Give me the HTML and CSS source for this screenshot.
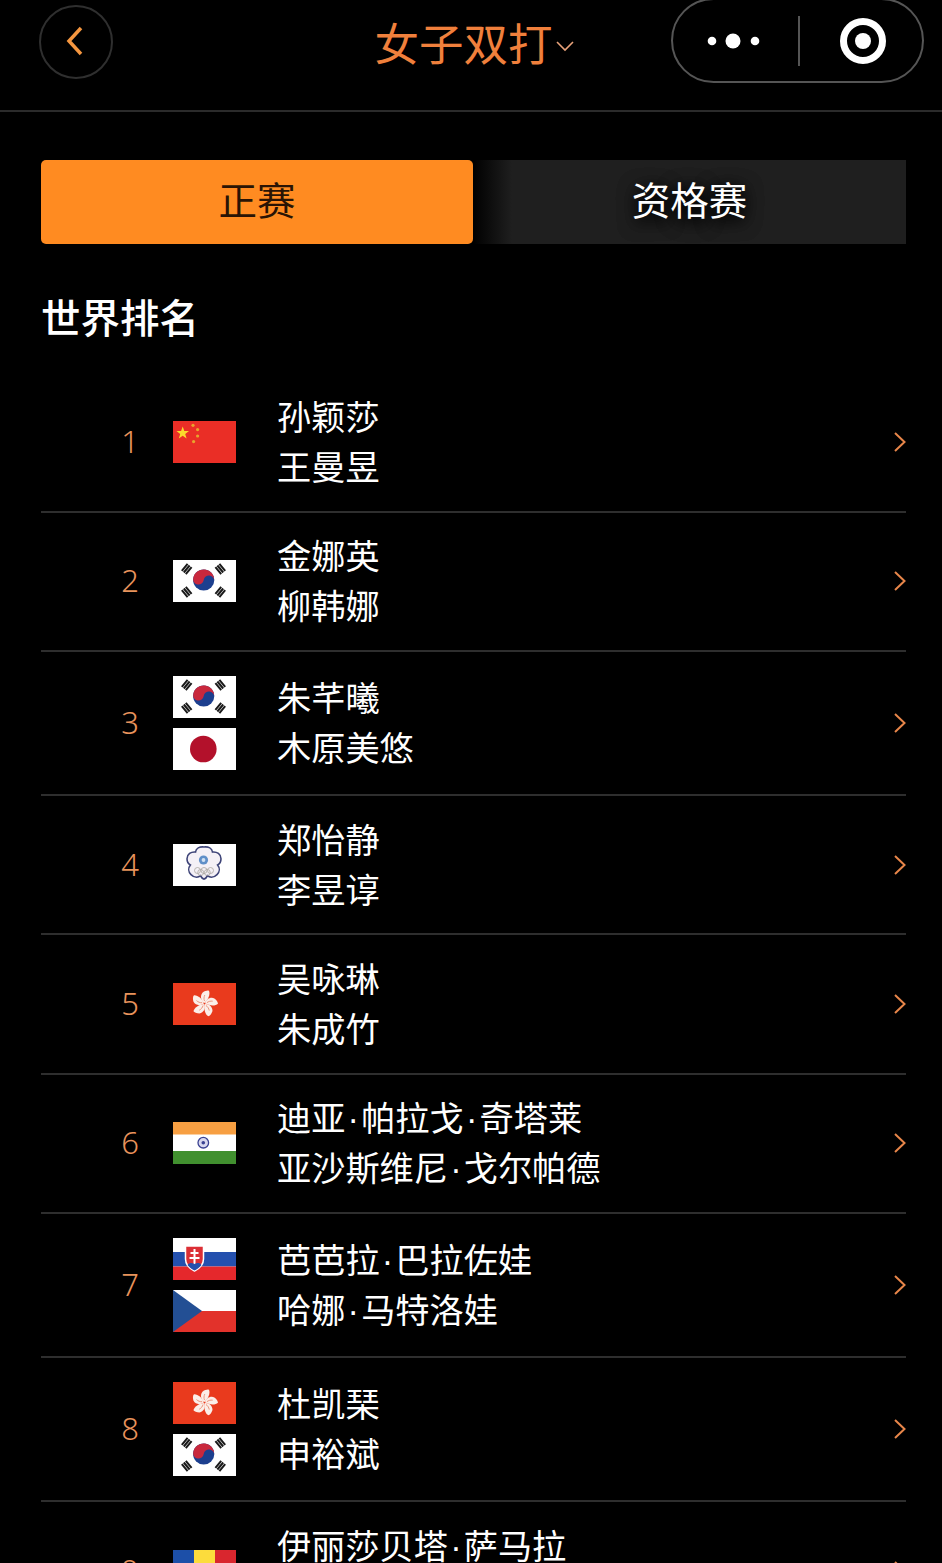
FILE: index.html
```html
<!DOCTYPE html>
<html lang="zh">
<head>
    <title>女子双打</title>
    <meta charset="UTF-8">
    <link rel="stylesheet" href="styles.css">
</head>
<body>

<!-- flags, reused by the rows below -->
<svg class="defs" aria-hidden="true">
    <symbol id="cn" viewBox="0 0 63 42">
        <rect width="63" height="42" fill="#ea2e26"/>
        <polygon points="9.700,5.500 11.300,10 16,10 12.200,12.900 13.600,17.400 9.700,14.700 5.800,17.400 7.200,12.900 3.400,10 8.100,10" fill="#fbd92c"/>
        <circle cx="20" cy="4.300" r="1.600" fill="#e8a52c"/>
        <circle cx="24.600" cy="8.600" r="1.600" fill="#e8a52c"/>
        <circle cx="24.600" cy="15" r="1.600" fill="#e8a52c"/>
        <circle cx="20.600" cy="20.600" r="1.600" fill="#e8a52c"/>
    </symbol>
    <symbol id="kr" viewBox="0 0 63 42">
        <rect width="63" height="42" fill="#fff"/>
        <circle cx="30.700" cy="20" r="10.600" fill="#1c3f8f"/>
        <path d="M20.100 20A10.600 10.600 0 0 1 41.300 20A5.300 5.300 0 0 0 30.700 20A5.300 5.300 0 0 1 20.100 20z" fill="#c9283d" transform="rotate(8 30.700 20)"/>
        <g stroke="#1a1a1a" stroke-width="2">
            <path d="M8.800 10.800l5.800-7M10.800 12.500l5.800-7M12.800 14.200l5.800-7"/>
            <path d="M42.400 7.200l5.800 7M44.400 5.500l5.800 7M46.400 3.800l5.800 7"/>
            <path d="M8.800 30.200l5.800 7M10.800 28.500l5.800 7M12.800 26.800l5.800 7"/>
            <path d="M42.400 33.800l5.800-7M44.400 35.500l5.800-7M46.400 37.200l5.800-7"/>
        </g>
    </symbol>
    <symbol id="jp" viewBox="0 0 63 42">
        <rect width="63" height="42" fill="#fff"/>
        <circle cx="30.300" cy="21" r="13.300" fill="#b3112b"/>
    </symbol>
    <symbol id="tpe" viewBox="0 0 63 42">
        <rect width="63" height="42" fill="#fff"/>
        <path d="M31 3c4.500-.500 8 1.500 8.500 5 4.500-.500 8.500 2.200 8.500 6.800 0 2.800-1.200 5-3.400 6.200 2.300 2.800 2.300 6.800-.600 9.600-2.800 2.800-6.800 3.400-9.600 1.100-1.100 2.300-2.300 3.400-3.400 3.400s-2.300-1.100-3.400-3.400c-2.800 2.300-6.800 1.700-9.600-1.100-2.900-2.800-2.900-6.800-.600-9.600-2.200-1.200-3.400-3.400-3.400-6.200 0-4.600 4-7.300 8.500-6.800.500-3.500 4-5.500 8.500-5z" fill="#f4f0f6" stroke="#3e4478" stroke-width="1.600"/>
        <circle cx="30.500" cy="16" r="4.600" fill="#5f8fc8"/>
        <circle cx="30.500" cy="16" r="1.900" fill="#cfe0f2"/>
        <g fill="none" stroke="#a9a6a0" stroke-width=".800">
            <circle cx="24.500" cy="26.500" r="3"/>
            <circle cx="31" cy="26.500" r="3"/>
            <circle cx="37.500" cy="26.500" r="3"/>
            <circle cx="27.700" cy="28.500" r="3"/>
            <circle cx="34.300" cy="28.500" r="3"/>
        </g>
    </symbol>
    <symbol id="hk" viewBox="0 0 63 42">
        <rect width="63" height="42" fill="#e93a1d"/>
        <g id="flower">
            <g id="petal">
                <path d="M31.500 20c-4-2.500-4.600-7.500-1.800-10.500 2.200-1.600 5-2.300 6.200-1.700 1.700 3.400-.600 8.800-4.400 12.200z" fill="#fbeee8"/>
                <path d="M31.500 18c-.800-2-.600-4 .300-6" fill="none" stroke="#e9866c" stroke-width=".800"/>
            </g>
            <use href="#petal" transform="rotate(72 31.500 20.500)"/>
            <use href="#petal" transform="rotate(144 31.500 20.500)"/>
            <use href="#petal" transform="rotate(216 31.500 20.500)"/>
            <use href="#petal" transform="rotate(288 31.500 20.500)"/>
        </g>
    </symbol>
    <symbol id="in" viewBox="0 0 63 42">
        <rect width="63" height="42" fill="#fff"/>
        <rect width="63" height="12.500" fill="#f79f42"/>
        <rect y="29" width="63" height="13" fill="#41902f"/>
        <circle cx="30.300" cy="20.700" r="5.300" fill="#d9d8ee" stroke="#3a4192" stroke-width="1.300"/>
        <circle cx="30.300" cy="20.700" r="1.800" fill="#3a4192"/>
    </symbol>
    <symbol id="sk" viewBox="0 0 63 42">
        <rect width="63" height="42" fill="#fff"/>
        <rect y="14" width="63" height="14.500" fill="#2450ae"/>
        <rect y="28.500" width="63" height="13.500" fill="#e5282c"/>
        <path d="M12.500 8h18v13c0 6-5 10-9 12-4-2-9-6-9-12z" fill="#dc2f35" stroke="#fff" stroke-width="1.500"/>
        <path d="M21.500 11v16M17.500 15h8M16.500 20h10" stroke="#fff" stroke-width="2"/>
        <path d="M14.500 27c2-2.500 4-2.500 7-1 3-1.500 5-1.500 7 1-2 2.500-4.500 4.500-7 5.500-2.500-1-5-3-7-5.500z" fill="#2450ae"/>
    </symbol>
    <symbol id="cz" viewBox="0 0 63 42">
        <rect width="63" height="42" fill="#fff"/>
        <rect y="21" width="63" height="21" fill="#e2322b"/>
        <polygon points="0,0 29,21 0,42" fill="#234f94"/>
    </symbol>
    <symbol id="ro" viewBox="0 0 63 42">
        <rect width="21" height="42" fill="#1c4fa8"/>
        <rect x="21" width="21" height="42" fill="#fcdc3c"/>
        <rect x="42" width="21" height="42" fill="#d9262e"/>
    </symbol>
    <symbol id="arrow" viewBox="0 0 14 22">
        <path d="M2 2l9.500 9L2 20" fill="none" stroke="#e8864a" stroke-width="2"/>
    </symbol>
</svg>

<div class="page">

    <div class="header">
        <div class="back">
            <svg width="18" height="30" viewBox="0 0 18 30"><path d="M15 2L3 15l12 13" fill="none" stroke="#f5963f" stroke-width="3.500"/></svg>
        </div>
        <div class="title">
            女子双打
            <svg class="caret" width="20" height="12" viewBox="0 0 20 12"><path d="M2 2l8 8 8-8" fill="none" stroke="#e9a27a" stroke-width="1.600"/></svg>
        </div>
        <div class="capsule">
            <svg class="dots" width="54" height="16" viewBox="0 0 54 16">
                <circle cx="5" cy="8" r="4.300" fill="#fff"/>
                <circle cx="26" cy="8" r="7.500" fill="#fff"/>
                <circle cx="48" cy="8" r="4.300" fill="#fff"/>
            </svg>
            <div class="divider"></div>
            <svg class="target" width="46" height="46" viewBox="0 0 46 46">
                <circle cx="23" cy="23" r="19.500" fill="none" stroke="#fff" stroke-width="7"/>
                <circle cx="23" cy="23" r="8" fill="#fff"/>
            </svg>
        </div>
    </div>

    <div class="tabs">
        <div class="tab active">正赛</div>
        <div class="tab"><span>资格赛</span></div>
    </div>

    <h2>世界排名</h2>

    <ul class="ranking">
        <li class="row">
            <div class="num">1</div>
            <div class="flags"><svg class="flag"><use href="#cn"/></svg></div>
            <div class="names"><div>孙颖莎</div><div>王曼昱</div></div>
            <svg class="more"><use href="#arrow"/></svg>
        </li>
        <li class="row">
            <div class="num">2</div>
            <div class="flags"><svg class="flag"><use href="#kr"/></svg></div>
            <div class="names"><div>金娜英</div><div>柳韩娜</div></div>
            <svg class="more"><use href="#arrow"/></svg>
        </li>
        <li class="row">
            <div class="num">3</div>
            <div class="flags"><svg class="flag"><use href="#kr"/></svg><svg class="flag"><use href="#jp"/></svg></div>
            <div class="names"><div>朱芊曦</div><div>木原美悠</div></div>
            <svg class="more"><use href="#arrow"/></svg>
        </li>
        <li class="row">
            <div class="num">4</div>
            <div class="flags"><svg class="flag"><use href="#tpe"/></svg></div>
            <div class="names"><div>郑怡静</div><div>李昱谆</div></div>
            <svg class="more"><use href="#arrow"/></svg>
        </li>
        <li class="row">
            <div class="num">5</div>
            <div class="flags"><svg class="flag"><use href="#hk"/></svg></div>
            <div class="names"><div>吴咏琳</div><div>朱成竹</div></div>
            <svg class="more"><use href="#arrow"/></svg>
        </li>
        <li class="row">
            <div class="num">6</div>
            <div class="flags"><svg class="flag"><use href="#in"/></svg></div>
            <div class="names"><div>迪亚<span class="dot">·</span>帕拉戈<span class="dot">·</span>奇塔莱</div><div>亚沙斯维尼<span class="dot">·</span>戈尔帕德</div></div>
            <svg class="more"><use href="#arrow"/></svg>
        </li>
        <li class="row">
            <div class="num">7</div>
            <div class="flags"><svg class="flag"><use href="#sk"/></svg><svg class="flag"><use href="#cz"/></svg></div>
            <div class="names"><div>芭芭拉<span class="dot">·</span>巴拉佐娃</div><div>哈娜<span class="dot">·</span>马特洛娃</div></div>
            <svg class="more"><use href="#arrow"/></svg>
        </li>
        <li class="row">
            <div class="num">8</div>
            <div class="flags"><svg class="flag"><use href="#hk"/></svg><svg class="flag"><use href="#kr"/></svg></div>
            <div class="names"><div>杜凯琹</div><div>申裕斌</div></div>
            <svg class="more"><use href="#arrow"/></svg>
        </li>
        <li class="row">
            <div class="num">9</div>
            <div class="flags"><svg class="flag"><use href="#ro"/></svg></div>
            <div class="names"><div>伊丽莎贝塔<span class="dot">·</span>萨马拉</div></div>
            <svg class="more"><use href="#arrow"/></svg>
        </li>
    </ul>

</div>

</body>
</html>
```

FILE: styles.css
```css
html {
    box-sizing: border-box;
}
*, *:before, *:after {
    box-sizing: inherit;
}

html, body {
    margin: 0;
    background-color: #000;
}

body {
    font-family: "Noto Sans CJK SC", "Liberation Sans", sans-serif;
    color: #fff;
}

.defs {
    position: absolute;
    width: 0;
    height: 0;
}

.page {
    height: 1563px;
    overflow: hidden;
}

/* top bar */
.header {
    height: 112px;
    padding: 0 18px 0 39px;
    border-bottom: 2px solid #2b2b2b;
    display: grid;
    grid-template-columns: 1fr auto 1fr;
    align-items: start;
}

.back {
    width: 74px;
    height: 74px;
    margin-top: 5px;
    border: 2px solid #2f2f2f;
    border-radius: 50%;
    display: flex;
    align-items: center;
    justify-content: center;
    padding-right: 2px;
    padding-bottom: 2px;
}

.title {
    margin: 11px 0 0 -14px;
    height: 62px;
    display: flex;
    align-items: center;
    font-size: 44.5px;
    line-height: 62px;
    color: #f0803c;
}

.caret {
    margin-top: 8px;
    margin-left: 2px;
}

.capsule {
    justify-self: end;
    width: 253px;
    height: 85px;
    margin-top: -2px;
    border: 2px solid #555;
    border-radius: 43px;
    display: flex;
    align-items: center;
    padding-left: 34px;
}

.divider {
    width: 2px;
    height: 50px;
    margin-left: 37px;
    background-color: #555;
}

.target {
    margin-left: 40px;
}

/* tabs */
.tabs {
    margin: 48px 36px 0 41px;
    height: 84px;
    display: flex;
}

.tab {
    flex: 1;
    padding-bottom: 8px;
    display: flex;
    align-items: center;
    justify-content: center;
    font-size: 38.5px;
    background: linear-gradient(to right, #000, #1f1f1f 9%);
}

.tab span {
    text-shadow: 0 4px 18px #000, 0 4px 18px #000;
}

.tab.active {
    flex: 0 0 432px;
    background: #ff8b21;
    color: #2a1405;
    border-radius: 5px;
}

h2 {
    margin: 44px 0 29.6px 41px;
    font-size: 39.5px;
    line-height: 56px;
    font-weight: 500;
}

/* ranking list */
.ranking {
    list-style: none;
    margin: 0 36px 0 41px;
    padding: 0;
}

.row {
    display: flex;
    align-items: center;
    padding: 18.6px 0;
    border-bottom: 2px solid #2e2e2e;
}

.num {
    width: 132px;
    padding: 0 32px 2px 78px;
    font-family: "Noto Sans", sans-serif;
    font-weight: 300;
    font-size: 31px;
    line-height: 44px;
    text-align: center;
    color: #e8935c;
}

.flags {
    width: 105px;
    padding: 5.55px 0;
    display: flex;
    flex-direction: column;
    gap: 10px;
}

.flag {
    display: block;
    width: 63px;
    height: 42px;
}

.names {
    flex: 1;
    min-height: 100px;
    margin: -2px 0 2px -1px;
    font-size: 34.2px;
    line-height: 50px;
}

.dot {
    margin: 0 2.2px;
    font-family: "Liberation Sans", sans-serif;
    line-height: 0;
}

.more {
    width: 14px;
    height: 22px;
    margin-right: -1px;
}
```
